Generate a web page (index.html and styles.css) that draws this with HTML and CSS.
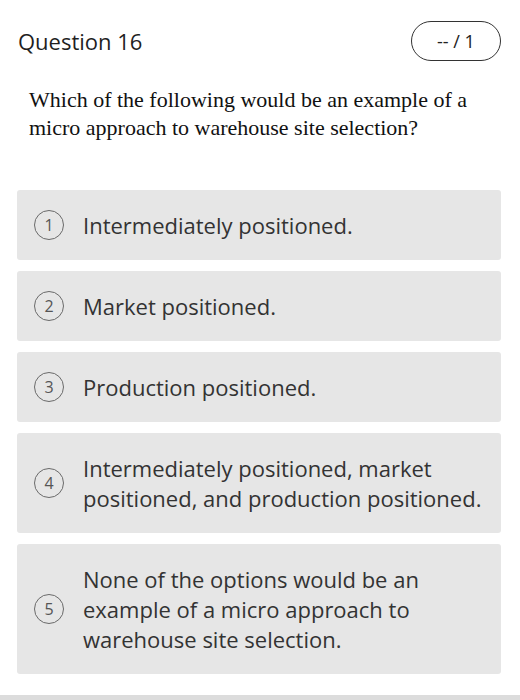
FILE: index.html
```html
<!DOCTYPE html>
<html>
<head>
<meta charset="utf-8">
<link rel="stylesheet" href="styles.css">
</head>
<body>
<div class="page">
  <header class="header">
    <h1 class="title">Question 16</h1>
    <div class="score">-- / 1</div>
  </header>
  <p class="question">Which of the following would be an example of a micro approach to warehouse site selection?</p>
  <ul class="options">
    <li class="option"><span class="num">1</span><span class="text">Intermediately positioned.</span></li>
    <li class="option"><span class="num">2</span><span class="text">Market positioned.</span></li>
    <li class="option"><span class="num">3</span><span class="text">Production positioned.</span></li>
    <li class="option"><span class="num">4</span><span class="text">Intermediately positioned, market positioned, and production positioned.</span></li>
    <li class="option"><span class="num">5</span><span class="text">None of the options would be an example of a micro approach to warehouse site selection.</span></li>
  </ul>
</div>
<div class="bottom-bar"></div>
</body>
</html>
```
FILE: styles.css
```css
html, body {
  margin: 0;
  padding: 0;
  background: #ffffff;
  height: 700px;
  overflow: hidden;
}
body {
  font-family: "Open Sans", "Liberation Sans", sans-serif;
  color: #2b2b2b;
  display: flex;
  flex-direction: column;
}
.page {
  padding: 21px 19px 0 17px;
  flex: 1;
}
.header {
  display: flex;
  align-items: center;
  justify-content: space-between;
  padding-left: 1px;
}
.title {
  margin: 0;
  font-size: 22px;
  font-weight: 400;
  color: #1f1f1f;
}
.score {
  box-sizing: border-box;
  width: 90px;
  height: 40px;
  border: 1.5px solid #333;
  border-radius: 20px;
  display: flex;
  align-items: center;
  justify-content: center;
  font-size: 18px;
  color: #222;
}
.question {
  margin: 25px 0 0 12px;
  font-family: "Liberation Serif", "Times New Roman", serif;
  font-size: 22px;
  line-height: 28px;
  color: #111;
  max-width: 450px;
}
.options {
  list-style: none;
  margin: 48px 0 0 0;
  padding: 0;
  display: flex;
  flex-direction: column;
  gap: 11px;
}
.option {
  background: #e6e6e6;
  border-radius: 3px;
  display: flex;
  align-items: center;
  padding: 20px 16px 20px 17px;
}
.num {
  box-sizing: border-box;
  flex: none;
  width: 30px;
  height: 30px;
  border: 1.5px solid #6a6a6a;
  border-radius: 50%;
  display: flex;
  align-items: center;
  justify-content: center;
  font-size: 16px;
  color: #555;
}
.text {
  margin-left: 19px;
  font-size: 22px;
  line-height: 30px;
  color: #333;
}
.bottom-bar {
  height: 5px;
  background: #dcdcdc;
  flex: none;
}
```
